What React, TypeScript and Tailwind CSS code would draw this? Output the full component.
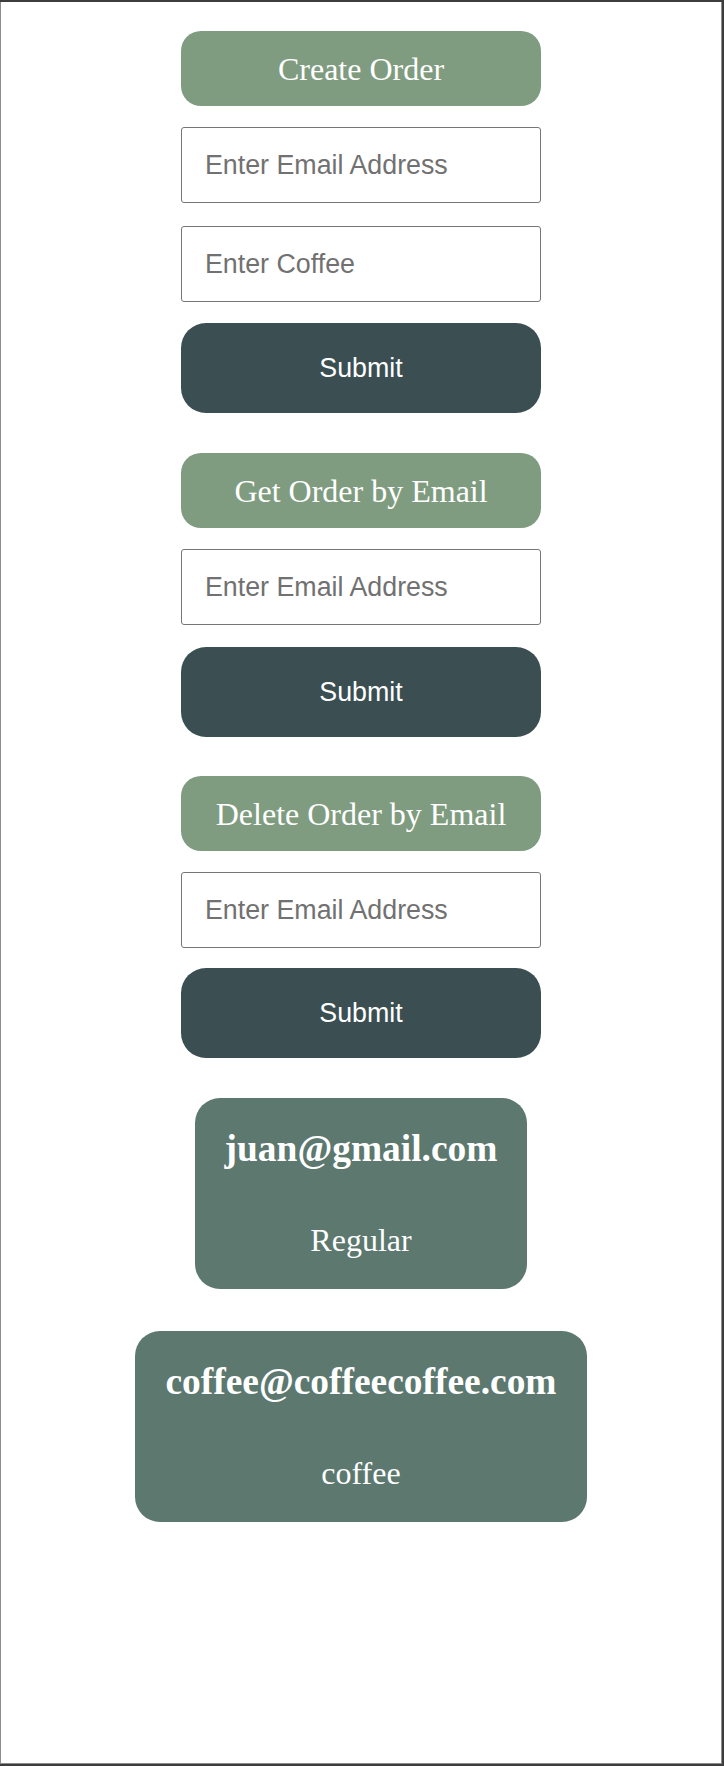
import React from "react";

const serif = "font-['Liberation_Serif','Times_New_Roman',serif]";
const sans = "font-['Liberation_Sans',Arial,sans-serif]";

function Header({ children, className = "" }: { children: React.ReactNode; className?: string }) {
  return (
    <div
      className={`w-[360px] h-[75px] rounded-[20px] bg-[#7f9c80] text-white text-[32px] flex items-center justify-center ${serif} ${className}`}
    >
      {children}
    </div>
  );
}

function Field({ placeholder, className = "" }: { placeholder: string; className?: string }) {
  return (
    <input
      type="text"
      placeholder={placeholder}
      className={`block w-[360px] h-[76px] border border-[#767676] rounded-[3px] bg-white pl-[23px] text-[26.8px] text-black placeholder:text-[#717171] outline-none ${sans} ${className}`}
    />
  );
}

function Submit({ className = "" }: { className?: string }) {
  return (
    <button
      type="button"
      className={`w-[360px] h-[90px] rounded-[25px] bg-[#3b4f52] text-white text-[26.8px] flex items-center justify-center ${sans} ${className}`}
    >
      Submit
    </button>
  );
}

function Card({ email, coffee, className = "" }: { email: string; coffee: string; className?: string }) {
  return (
    <div
      className={`rounded-[25px] bg-[#5c786f] text-white px-[30px] pt-[29px] pb-[30px] flex flex-col items-center ${serif} ${className}`}
    >
      <h3 className="text-[37.44px] font-bold leading-[43px] whitespace-nowrap">{email}</h3>
      <p className="text-[32px] leading-[37px] mt-[52px]">{coffee}</p>
    </div>
  );
}

export default function App() {
  return (
    <div className="w-full h-[1766px] bg-[#3d3d3d] pt-[2px] pr-[2px] pb-[2px]">
      <div className="h-full bg-white border-l border-r border-b border-[#8c8c8c] flex flex-col items-center pt-[29px]">
        <Header>Create Order</Header>
        <Field placeholder="Enter Email Address" className="mt-[21px]" />
        <Field placeholder="Enter Coffee" className="mt-[23px]" />
        <Submit className="mt-[21px]" />

        <Header className="mt-[40px]">Get Order by Email</Header>
        <Field placeholder="Enter Email Address" className="mt-[21px]" />
        <Submit className="mt-[22px]" />

        <Header className="mt-[39px]">Delete Order by Email</Header>
        <Field placeholder="Enter Email Address" className="mt-[21px]" />
        <Submit className="mt-[20px]" />

        <Card email="juan@gmail.com" coffee="Regular" className="mt-[40px]" />
        <Card email="coffee@coffeecoffee.com" coffee="coffee" className="mt-[42px]" />
      </div>
    </div>
  );
}
